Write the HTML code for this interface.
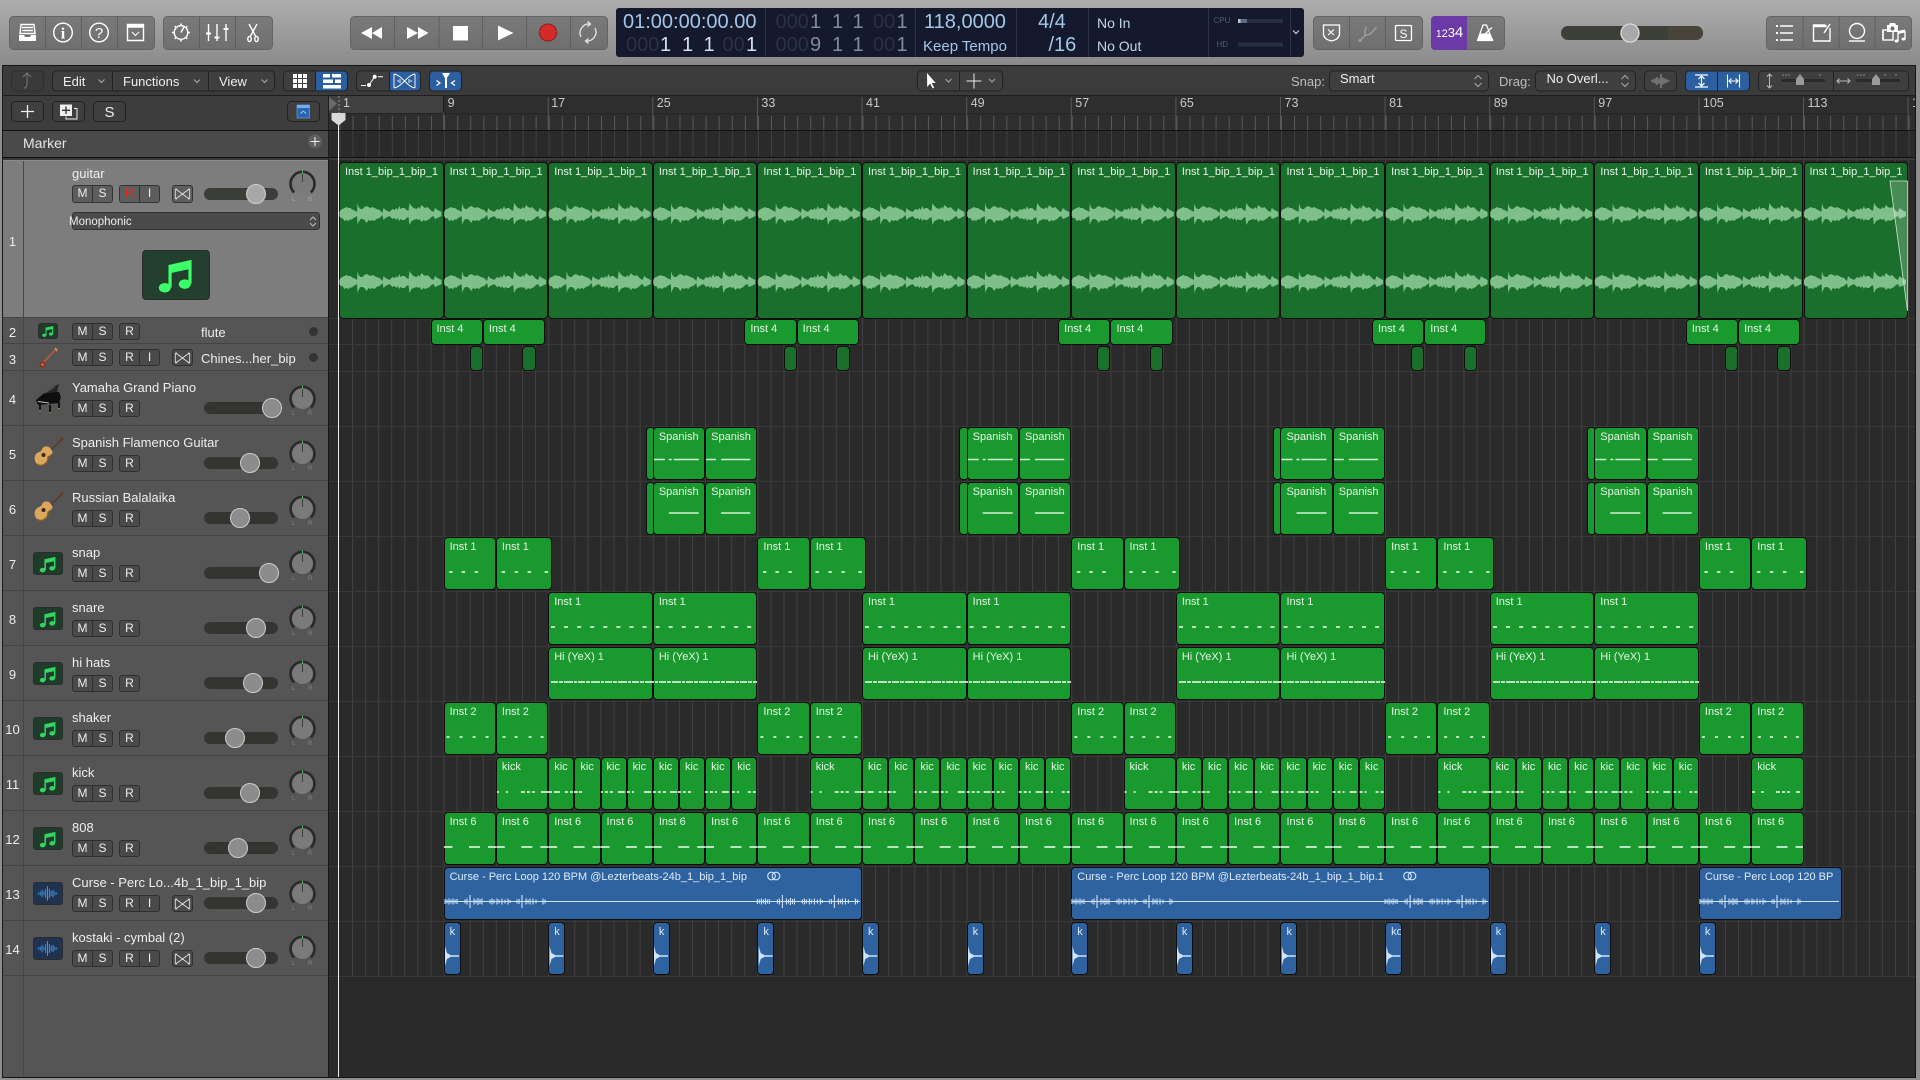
<!DOCTYPE html>
<html><head><meta charset="utf-8"><title>Logic Pro</title>
<style>
html,body{margin:0;padding:0;background:#8b8b8b}
#p{position:relative;width:1920px;height:1080px;overflow:hidden;background:#8b8b8b;font-family:"Liberation Sans",sans-serif}
svg{display:block}
.abs{position:absolute;left:0;top:0}
text{font-family:"Liberation Sans",sans-serif}
.tl{position:absolute;left:0;width:1916px;height:0}
.r{position:absolute;left:calc(339px + (var(--b) - 1)*13.076px);width:calc(var(--w)*13.076px);top:1px;height:var(--h,53px);box-sizing:border-box;background:#1a9a2e;border:1px solid #0e0e0e;border-radius:4px;font-size:11px;line-height:14px;color:#e6f4e6;padding:2px 0 0 5px;overflow:hidden;white-space:nowrap}
.d{background:#1b6f2c}
.u{background:#2f63a0;color:#dfeaf7}
.h{position:absolute;left:0;width:329px;background:#555;box-shadow:inset 0 -1px 0 #444}
.h:before{content:"";position:absolute;left:23px;top:0;bottom:0;width:1px;background:#474747}
.h>*{position:absolute}
.n{left:2px;width:21px;text-align:center;top:20px;font:normal 13px/18px "Liberation Sans",sans-serif;color:#eee}
.t{left:72px;top:9px;font-size:13px;line-height:16px;color:#eee;white-space:nowrap}
.bt{top:29px;height:17px;box-sizing:border-box;display:flex;border:1px solid #2f2f2f;background:#4a4a4a;border-radius:3px}
.bt i{flex:1;text-align:center;font:normal 12px/15px "Liberation Sans",sans-serif;color:#eee}
.bt i+i{border-left:1px solid #2f2f2f}
.m{left:72px;width:41px}
.r1{left:119px;width:21px}
.r2{left:119px;width:41px}
.f{left:172px;width:21px}
.f svg{margin:1px 0 0 1px}
.fd{left:204px;width:74px;top:31px;height:12px;background:#343531;border-radius:6px}
.fd u{position:absolute;top:-4px;width:20px;height:20px;box-sizing:border-box;margin-left:-10px;background:#8c8c8c;border:1.5px solid #cdcdcd;border-radius:50%}
.pk{left:289px;top:14px}
.lr{top:40px;font-size:6px;line-height:7px;color:#858585}
.ic{left:33px;top:16px;width:30px;height:23px;box-sizing:border-box;background:#1f3c2b;border:1px solid #2c2c2c;border-radius:3px;color:#35d465;display:flex;align-items:center;justify-content:center}
.au{background:#1f3350;color:#3f9cf0}
.dot{left:309px;width:9px;height:9px;border-radius:50%;background:#333}
.sel{background:#7d7d7d}
.sel .bt{background:#5d5d5d;border-color:#333}
.sel .bt i+i{border-left-color:#333}
.sel .fd{background:#3b3d38}
.sel .lr{color:#aaa}
</style></head><body><div id="p">

<svg width="0" height="0" style="position:absolute">
<defs>
<linearGradient id="bg" x1="0" y1="0" x2="0" y2="1"><stop offset="0" stop-color="#adadad"/><stop offset="1" stop-color="#8a8a8a"/></linearGradient>
<linearGradient id="bt" x1="0" y1="0" x2="0" y2="1"><stop offset="0" stop-color="#7a7a7a"/><stop offset="1" stop-color="#6f6f6f"/></linearGradient>
<symbol id="note" viewBox="0 0 24 24" fill="currentColor"><path d="M8.600 19.200V7L20 4.500v12.500" fill="none" stroke="currentColor" stroke-width="1.800"/><path d="M8.600 6.500L20 4v4.500L8.600 11z"/><ellipse cx="5.600" cy="19.300" rx="3.400" ry="2.700"/><ellipse cx="17" cy="17.200" rx="3.400" ry="2.700"/></symbol>
<symbol id="aud" viewBox="0 0 24 18"><path stroke="currentColor" stroke-width="1" fill="none" d="M1.500 8v2M3.500 7v4M5.500 5v8M7.500 7v4M9.500 4v10M11.500 1v16M13.500 4v10M15.500 6v6M17.500 5v8M19.500 7v4M21.500 8v2"/></symbol>
<symbol id="bow" viewBox="0 0 19 15"><path fill="none" stroke="#ddd" stroke-width="1" d="M1.500 2v11M17.500 2v11M1.500 2C7 5 12 10 17.500 13M1.500 13C7 10 12 5 17.500 2M1.500 2h2M1.500 13h2M17.500 2h-2M17.500 13h-2"/></symbol>
<symbol id="pan" viewBox="0 0 27 27"><circle cx="13.500" cy="13.500" r="10.500" fill="#7a7a7a"/><path d="M5.200 22.500A12 12 0 1 1 21.800 22.500" fill="none" stroke="#2a2a2a" stroke-width="2.600"/><path d="M13.500 0.500V12" stroke="#3c3c3c" stroke-width="1"/><path d="M13.500 0.500V4" stroke="#4fb56a" stroke-width="1"/></symbol>
<symbol id="gt" viewBox="0 0 30 32"><path d="M29 1L15 15" stroke="#5a3e28" stroke-width="1.800"/><path d="M27 0l3 1-2 3-2-1z" fill="#6b3a28"/><path d="M16 11c2 2 3 4 2 6-1 2-3 2-4 3 0 2 0 4-2 6-3 3-7 3-9 1-3-3-3-7-1-10 2-2 4-2 5-3 1-1 1-3 3-4 2-1 4-1 6 1z" fill="#dba65e"/><path d="M18 17c-1 2-3 2-4 3 0 2 0 4-2 6-3 3-7 3-9 1" fill="none" stroke="#8c5e24" stroke-width="1.300"/><circle cx="9.500" cy="18" r="2" fill="#3a2a18"/></symbol>
<symbol id="pia" viewBox="0 0 26 30"><path d="M1 17L8 11L14 8L24 9L26 14L24 20L3 22z" fill="#0e0e0e"/><path d="M8 11L20 3L24 1L22 9z" fill="#262626"/><path d="M10 10l10-6" stroke="#666" stroke-width=".6"/><path d="M3 18.500L14 20" stroke="#bbb" stroke-width="1"/><path d="M5 21v6M15 22v7M24 19v6" stroke="#111" stroke-width="2"/><path d="M5 27v1M15 29v1M24 25v1" stroke="#b98a3a" stroke-width="1.600"/></symbol>
<symbol id="bj" viewBox="0 0 20 22"><path d="M19 1L4 17" stroke="#b85c34" stroke-width="1.600"/><path d="M17 1l2 3" stroke="#dca070" stroke-width="1.200"/><ellipse cx="4.500" cy="17.500" rx="3.200" ry="3" fill="#8c3326"/><circle cx="4.500" cy="17.500" r="1" fill="#d8a070"/></symbol>
<path id="ws" fill="#7fbf8a" d="M0-2L1-4L3-5L5-6L7-7L9-6L11-6L12-5L14-4L16-3L17.500-2L18-11L19-7L21-5L23-5L25-7L27-8L29-7L31-6L33-7L35-6L37-5L40-4L42-2L43-1L44-6L46-4L48-3L50-2L51-3L53-5L55-4L57-6L58-4L60-8L61-5L63-6L65-6L67-4L69-3L70-11L72-8L74-6L77-5L79-7L80-5L82-9L84-7L86-6L88-7L90-5L92-3L94-2L95.500-6L98-4L100-3L102-2L102 2L100 3L98 4L95.500 5L94 2L92 3L90 5L88 6L86 7L84 6L82 8L80 5L79 6L77 5L74 6L72 7L70 11L69 3L67 4L65 6L63 6L61 5L60 7L58 4L57 6L55 4L53 5L51 3L50 2L48 3L46 4L44 6L43 1L42 2L40 4L37 5L35 7L33 6L31 7L29 6L27 9L25 6L23 5L21 5L19 8L18 11L17.500 2L16 3L14 4L12 6L11 5L9 7L7 6L5 7L3 4L1 4L0 2z"/>
<g id="w2"><use href="#ws" y="214"/><use href="#ws" y="282"/></g>
<g id="sn"><path d="M5.500 0h3.500M18 0h3.500M31 0h3.500M58 0h3.500M71 0h3.500M84 0h3.500M101 0h3.500"/></g>
<g id="sh"><path d="M3 0h3M16 0h3M29 0h3M42 0h3M59 0h3M71 0h3M85 0h3M97 0h3"/></g>
<g id="ki"><path d="M1 0h2M10 0h2M25 0h4M31 0h3M36 0h3M45 0h6M51 0h5M58 0h6M69 0h3M74 0h3M78 0h4M83 0h3M105 0h2M109 0h3M114 0h3M122 0h7M131 0h3M136 0h2M148 0h7M157 0h3M162 0h3M167 0h3M174 0h7M182 0h3M187 0h3M192 0h3M209 0h3M214 0h3M219 0h2M226 0h7M236 0h3M241 0h2M252 0h3M257 0h3"/></g>
<g id="s5"><path d="M1 0H12M16 0h3M21 0H46M53.300 0H63.300M68.300 0H97.500"/></g>
<g id="s6"><path d="M16 0H46M68.300 0H97.500"/></g>
<g id="cw"><path d="M0-2.500v5M2-2v4M4-3v6M6-2v4M8-3v6M10-2v4M12-2.500v5M20-2v4M22-3v6M25-6.500v13M29-3v6M31-2v4M33-3.500v7M35-2.500v5M37-3v6M45-2v4M47-3v6M49-2v4M52-3v6M54-2v4M57-3v6M60-2v4M63-3v6M65-1.500v3M72-2v4M74-2.500v5M77-6.500v13M81-3v6M83-2v4M85-3v6M88-3v6M91-2v4M98-3v6M100-2v4"/></g>
<path id="kw" d="M1-10L3-3L7-.7L15-.7L15 .7L7 .7L3 3L1 10z"/>
</defs>
</svg>

<!-- top chrome -->
<svg class="abs" width="1920" height="160" style="z-index:1">
<rect width="1920" height="66" fill="url(#bg)"/>
<g fill="url(#bt)" stroke="#646464">
<rect x="9.500" y="16.500" width="145" height="33" rx="4"/>
<rect x="163.500" y="16.500" width="109" height="33" rx="4"/>
<rect x="350.500" y="16.500" width="257" height="33" rx="4"/>
<rect x="1313.500" y="16.500" width="109" height="33" rx="4"/>
<rect x="1431.500" y="16.500" width="73" height="33" rx="4"/>
<rect x="1766.500" y="16.500" width="145" height="33" rx="4"/>
</g>
<path d="M1435 16h32v34h-32a4 4 0 0 1-4-4V20a4 4 0 0 1 4-4z" fill="#6b3aa6"/>
<path stroke="#5f5f5f" d="M45.500 17v32M81.500 17v32M117.500 17v32M199.500 17v32M235.500 17v32M394.500 17v32M439 17v32M482.500 17v32M526.500 17v32M570.500 17v32M1349.500 17v32M1385.500 17v32M1803 17v32M1839 17v32M1875 17v32" fill="none"/>
<g fill="none" stroke="#fff" stroke-width="1.400">
<path d="M21 24.500h13l1 9H20zM22 27.500h11M22 30.500h11" />
<circle cx="63" cy="32.500" r="9.300"/>
<circle cx="99" cy="32.500" r="9.300"/>
<path d="M127.500 24.500h16v16h-16z"/><path d="M127 26h17" stroke-width="3.500"/><path d="M132 32l3.500 3.500 3.500-3.500" stroke-width="1"/>
<circle cx="181" cy="32.500" r="6.800"/><path d="M181 32.500l3-5.500" />
<path d="M181 23.500v1.500M181 40v1.500M172 32.500h1.500M188.500 32.500h1.500M174.700 26.200l1 1M186.300 37.800l1 1M187.300 26.200l-1 1M175.700 37.800l-1 1" stroke-width="1.600"/>
<path d="M208.500 24v17M217 24v17M226 24v17"/><path d="M206 33.500h5M214.500 37.500h5M223.500 29h5" stroke-width="2"/>
<path d="M249 24l7 13M257 24l-7 13"/><ellipse cx="249.500" cy="39" rx="1.700" ry="2.600"/><ellipse cx="256.500" cy="39" rx="1.700" ry="2.600"/>
</g>
<path d="M19 35h5l1 2h5l1-2h5v6H19z" fill="#fff"/>
<text x="63" y="38.500" text-anchor="middle" font-size="16" font-weight="bold" fill="#fff" style="font-family:'Liberation Serif',serif">i</text>
<text x="99" y="38" text-anchor="middle" font-size="15" fill="#fff">?</text>
<g fill="#fff">
<path d="M372 27v12l-11-6zM382 27v12l-10-6z"/>
<path d="M407 27v12l11-6zM418 27v12l10.500-6z"/>
<rect x="453" y="26" width="15" height="14.500"/>
<path d="M498 25.500l15.500 7.500-15.500 7.500z"/>
</g>
<ellipse cx="548" cy="32.500" rx="8.700" ry="8.500" fill="#d42a2a" stroke="#8b2020"/>
<g fill="none" stroke="#e4e4e4" stroke-width="1.300"><path d="M581 37a9 9 0 0 1 9-13"/><path d="M595 28a9 9 0 0 1-9 13"/><path d="M587.500 21.500l3 2.500-3 2.500M588.500 38.500l-3 2.500 3 2.500"/></g>
<!-- LCD -->
<rect x="616" y="8" width="688" height="49" rx="3" fill="#141a2b"/>
<path stroke="#2b3449" d="M765.500 8v49M915.500 8v49M1016.500 8v49M1088.500 8v49M1208.500 8v49M1290.500 8v49"/>
<g font-size="20" fill="#a3c6ea">
<text x="623" y="28">01:00:00:00.00</text>
<text x="626" y="51" fill="#2a3142">000</text><text x="660" y="51" fill="#cfe2f6">1</text><text x="682" y="51" fill="#cfe2f6">1</text><text x="703.500" y="51" fill="#cfe2f6">1</text><text x="722.500" y="51" fill="#2a3142">00</text><text x="746" y="51" fill="#cfe2f6">1</text>
<text x="775.500" y="28" fill="#2a3142">000</text><text x="810" y="28" fill="#7d8ba3">1</text><text x="832" y="28" fill="#7d8ba3">1</text><text x="852.500" y="28" fill="#7d8ba3">1</text><text x="873" y="28" fill="#2a3142">00</text><text x="896.500" y="28" fill="#7d8ba3">1</text>
<text x="775.500" y="51" fill="#2a3142">000</text><text x="810" y="51" fill="#7d8ba3">9</text><text x="832" y="51" fill="#7d8ba3">1</text><text x="852.500" y="51" fill="#7d8ba3">1</text><text x="873" y="51" fill="#2a3142">00</text><text x="896.500" y="51" fill="#7d8ba3">1</text>
<text x="924" y="28">118,0000</text>
<text x="1038" y="28">4/4</text>
<text x="1048.500" y="51">/16</text>
</g>
<text x="923" y="51" font-size="15" fill="#a3c6ea">Keep Tempo</text>
<text x="1097" y="28" font-size="14" fill="#c2d6ea">No In</text>
<text x="1097" y="51" font-size="14" fill="#c2d6ea">No Out</text>
<text x="1213.500" y="23" font-size="8" fill="#4c5a70">CPU</text>
<text x="1216.500" y="47" font-size="8" fill="#4c5a70">HD</text>
<rect x="1238" y="19" width="45" height="4" fill="#252f40"/><rect x="1238" y="19" width="9" height="4" fill="#5d6c84"/><rect x="1238" y="19" width="2.500" height="4" fill="#b8c4d4"/>
<rect x="1238" y="42.500" width="45" height="4" fill="#252f40"/>
<path d="M1293 30.500l3 3 3-3" fill="none" stroke="#c2d6ea" stroke-width="1.200"/>
<!-- group 3 icons -->
<g fill="none" stroke="#fff" stroke-width="1.300">
<path d="M1323.500 25h16v10c-1.500 4-4 5-8 6-4-1-6.500-2-8-6z"/><path d="M1328 29.500l6 5.500M1334 29.500l-6 5.500" stroke-width="1.100"/>
<path d="M1360.500 40l5-5c-1-2-1-5 1-8M1365.500 35c2 1 6-1 11-8" stroke="#a2a2a2"/>
<rect x="1395.500" y="25.500" width="16" height="15" rx="1"/>
</g>
<circle cx="1360" cy="40.500" r="1.500" fill="#a2a2a2"/>
<text x="1403.500" y="38" text-anchor="middle" font-size="12" fill="#fff">S</text>
<text x="1436" y="37" fill="#fff"><tspan font-size="10">1</tspan><tspan font-size="11">2</tspan><tspan font-size="13">3</tspan><tspan font-size="15">4</tspan></text>
<path d="M1483 25h3.500l6 15.500h-15z" fill="none" stroke="#fff" stroke-width="1.200"/>
<path d="M1480.500 33.500h9.500l3.500 7h-15.500z" fill="#fff"/>
<path d="M1485 34l7-6.500" stroke="#fff" stroke-width="1.200"/>
<!-- master -->
<rect x="1561" y="26" width="142" height="14" rx="7" fill="#3d4039"/>
<path d="M1668 26h28a7 7 0 0 1 0 14h-28z" fill="#484439"/>
<circle cx="1630" cy="33" r="9" fill="#a9a9a9" stroke="#dcdcdc" stroke-width="1.300"/>
<!-- group 5 icons -->
<g fill="none" stroke="#fff" stroke-width="1.400">
<path d="M1780 26h13M1780 33h13M1780 40h13"/><path d="M1776 26h2M1776 33h2M1776 40h2" stroke-width="2"/>
<path d="M1825 25h-11.500v16h16.500v-13"/><path d="M1813.500 26h13" stroke-width="2.500"/><path d="M1824 33l6-9" />
<circle cx="1857" cy="31" r="7.500"/><path d="M1849 41h16"/>
<rect x="1883" y="30" width="10" height="10"/><path d="M1884 32h-2M1884 35h-2M1884 38h-2" />
<path d="M1898 32v9M1905 31v8"/>
</g>
<path d="M1887 25h2l1-2h5l1 2h2v7h-11z" fill="#fff"/><circle cx="1892.500" cy="28.500" r="2" fill="#6f6f6f"/>
<ellipse cx="1896.500" cy="41" rx="2" ry="1.500" fill="#fff"/><ellipse cx="1903.500" cy="39" rx="2" ry="1.500" fill="#fff"/><path d="M1898 31l7-1.500v3l-7 1.500z" fill="#fff"/>

<!-- window chrome rows -->
<rect x="2" y="65" width="1914" height="31" rx="3" fill="#3b3b3b"/>
<path d="M2 65.500h1914" stroke="#141414"/>
<rect x="2" y="95" width="327" height="35" fill="#3d3d3d"/>
<rect x="329" y="95" width="1587" height="35" fill="#2e2e2e"/>
<rect x="329" y="95" width="115" height="18" fill="#404040"/>
<path d="M2 95.500h1914" stroke="#1f1f1f"/>
<rect x="2" y="131" width="327" height="26" fill="#4a4a4a"/>
<rect x="329" y="131" width="1587" height="26" fill="#2a2a2a"/>
<rect x="2" y="157" width="1914" height="3" fill="#3a3a3a"/>
<g fill="#3f3f3f" stroke="#222">
<rect x="11.500" y="71" width="32" height="20" rx="4" fill="#3a3a3a" stroke="#2e2e2e"/>
<rect x="52.500" y="71" width="222" height="20" rx="4"/>
<rect x="283.500" y="71" width="64" height="20" rx="4"/>
<rect x="356.500" y="71" width="64" height="20" rx="4"/>
<rect x="917.500" y="71" width="85" height="20" rx="4"/>
<rect x="1329.500" y="71" width="159" height="20" rx="4"/>
<rect x="1535.500" y="71" width="100" height="20" rx="4"/>
<rect x="1644.500" y="71" width="32" height="20" rx="4"/>
<rect x="1758.500" y="71" width="150" height="20" rx="4"/>
<rect x="11.500" y="101.500" width="32" height="20" rx="4"/>
<rect x="52.500" y="101.500" width="32" height="20" rx="4"/>
<rect x="93.500" y="101.500" width="32" height="20" rx="4"/>
<rect x="287.500" y="101.500" width="32" height="20" rx="4"/>
</g>
<g fill="#2c5f9f" stroke="#222">
<path d="M315.500 71h28a4 4 0 0 1 4 4v12a4 4 0 0 1-4 4h-28z"/>
<path d="M389.500 71h27a4 4 0 0 1 4 4v12a4 4 0 0 1-4 4h-27z"/>
<rect x="429.500" y="71" width="32" height="20" rx="4"/>
<rect x="1685.500" y="71" width="64" height="20" rx="4"/>
</g>
<path stroke="#222" d="M112.500 71v20M208.500 71v20M959.500 71v20M1717.500 71v20M1833.500 71v20"/>
<g fill="#eee" font-size="13">
<text x="63" y="86">Edit</text><text x="123" y="86">Functions</text><text x="219" y="86">View</text>
<text x="1340" y="83">Smart</text><text x="1546.500" y="83">No Overl...</text>
</g>
<text x="1291" y="86" font-size="13" fill="#bdbdbd">Snap:</text>
<text x="1499" y="86" font-size="13" fill="#bdbdbd">Drag:</text>
<g fill="none" stroke="#aaa" stroke-width="1">
<path d="M98.500 79.500l3 3 3-3M194 79.500l3 3 3-3M261.500 79.500l3 3 3-3"/>
<path d="M945.500 79l3 3 3-3M989 79l3 3 3-3"/>
<path d="M1474.500 79l3.500-3.500 3.500 3.500M1474.500 83l3.500 3.500 3.500-3.500"/>
<path d="M1621.500 79l3.500-3.500 3.500 3.500M1621.500 83l3.500 3.500 3.500-3.500"/>
<path d="M24 88c4 0 3-5 3-15M23 77l4-4 4 4" stroke="#777"/>
</g>
<path d="M293 74h4v4h-4zM298 74h4v4h-4zM303 74h4v4h-4zM293 79h4v4h-4zM298 79h4v4h-4zM303 79h4v4h-4zM293 84h4v4h-4zM298 84h4v4h-4zM303 84h4v4h-4z" fill="#fff"/>
<path d="M323 74h7v3.500h-7zM332 74h9v3.500h-9zM323 79.500h10v3.500h-10zM335 79.500h6v3.500h-6zM323 85h18v3.500h-18z" fill="#fff"/>
<path d="M361 85.500h5M369 85l5.700-8.300M378 76.700h5" stroke="#fff" stroke-width="1" fill="none"/><circle cx="369" cy="85" r="2" fill="#fff"/><circle cx="374.700" cy="76.700" r="2" fill="#fff"/>
<path d="M394 74v14M415 74v14M394 74C402 75 407 87 415 88M394 88C402 87 407 75 415 74M398 80v2M400 79v4M409 79v4M411 80v2" fill="none" stroke="#fff" stroke-width=".9"/>
<path d="M436.500 80.500l3.500 2.500-3.500 2.500M455 80.500l-3.500 2.500 3.500 2.500" fill="none" stroke="#fff" stroke-width="1.200"/><path d="M442 73h8l-3 5v10h-2V78z" fill="#fff"/>
<path d="M933 73l.2 14 3-3.500 2.500 5 1.500-1-2.500-4.500h4z" fill="#fff" transform="translate(-6 0)"/>
<path d="M966.500 81h15M974 73.500v15" stroke="#eee" stroke-width="1" fill="none"/>
<path d="M1651 81h1M1653 79.500v3M1655 78.500v5M1657 77v8M1659 78.500v5M1661 74v14M1663 77.500v7M1665 78.500v5M1667 79.500v3M1669 80.500v1" stroke="#bbb" stroke-width=".8" fill="none"/>
<path d="M1695 75h13M1695 87h13M1701.500 76v10M1698.500 79l3-3 3 3M1698.500 83l3 3 3-3" stroke="#fff" fill="none" stroke-width="1.200"/>
<path d="M1727.500 74.500v13M1739.500 74.500v13M1729 81h9M1731.500 78.500l-2.500 2.500 2.500 2.500M1735.500 78.500l2.500 2.500-2.500 2.500" stroke="#fff" fill="none" stroke-width="1.100"/>
<path d="M1769.500 74v14M1767 76.500l2.500-2.500 2.500 2.500M1767 85.500l2.500 2.500 2.500-2.500" stroke="#bbb" fill="none"/>
<path d="M1837 81h13M1839.500 78.500l-2.500 2.500 2.500 2.500M1847.500 78.500l2.500 2.500-2.500 2.500" stroke="#bbb" fill="none"/>
<rect x="1781" y="79" width="44" height="3" rx="1.500" fill="#2a2a2a"/><rect x="1856" y="79" width="44" height="3" rx="1.500" fill="#2a2a2a"/>
<path d="M1800 74l4 5v6h-8v-6z" fill="#9a9a9a"/><path d="M1876 74l4 5v6h-8v-6z" fill="#9a9a9a"/>
<path d="M1783 74v2M1786 74v2M1789 74v2M1800 74v2M1820 74v2M1858 74v2M1861 74v2M1864 74v2M1885 74v2M1896 74v2" stroke="#888" fill="none"/>
<path d="M27.500 105v13M21 111.500h13" stroke="#eee" stroke-width="1.300" fill="none"/>
<path d="M60 104.500h12v11.500H60z" fill="#eee"/><path d="M66 106.500v7.500M62 110.300h8" stroke="#333" stroke-width="1.300"/><path d="M74 108.500h3v10.500H66v-2.500" fill="none" stroke="#eee"/>
<text x="109.500" y="117" text-anchor="middle" font-size="15" fill="#eee">S</text>
<rect x="297" y="105" width="12.500" height="13" fill="#2a66b0" stroke="#74aef0" stroke-width=".6"/><rect x="297" y="105" width="12.500" height="3" fill="#74aef0"/><path d="M300.500 113.500l2.800-2.500 2.800 2.500" fill="none" stroke="#9cc6f5"/>
<text x="23" y="148" font-size="14" fill="#e8e8e8">Marker</text>
<circle cx="315" cy="141.500" r="7" fill="#5f5f5f"/><path d="M315 137v9M310.500 141.500h9" stroke="#eee" stroke-width="1.100"/>
<!-- ruler -->
<path d="M329 113.500h1587" stroke="#242424"/>
<line x1="339.500" x2="1916" y1="123" y2="123" stroke="#5a5a5a" stroke-width="14" stroke-dasharray="1 12.076"/>
<line x1="339.500" x2="1916" y1="144" y2="144" stroke="#404040" stroke-width="26" stroke-dasharray="1 12.076"/>
<path d="M548.200 97v33M652.800 97v33M757.400 97v33M862 97v33M966.700 97v33M1071.300 97v33M1175.900 97v33M1280.500 97v33M1385.100 97v33M1489.700 97v33M1594.300 97v33M1698.900 97v33M1803.500 97v33M1908.100 97v33" stroke="#585858"/>
<path d="M443.600 95v18" stroke="#1a1a1a"/><path d="M443.600 113v17" stroke="#585858"/>
<g font-size="12.500" fill="#c8c8c8">
<text x="343" y="107">1</text><text x="447.600" y="107">9</text><text x="551.200" y="107">17</text><text x="656.800" y="107">25</text><text x="761.400" y="107">33</text><text x="866" y="107">41</text><text x="970.700" y="107">49</text><text x="1075.300" y="107">57</text><text x="1179.900" y="107">65</text><text x="1284.500" y="107">73</text><text x="1389.100" y="107">81</text><text x="1493.700" y="107">89</text><text x="1598.300" y="107">97</text><text x="1702.900" y="107">105</text><text x="1807.500" y="107">113</text><text x="1912" y="107">121</text>
</g>
<path d="M329 97l8 6.500-8 7.500z" fill="#6a6a6a"/>
<path d="M339 96v17" stroke="#999" stroke-dasharray="2 2"/>
<path d="M2 130.500h1914" stroke="#111"/>
<path d="M2 157.500h1914M2 160.500h1914" stroke="#111"/>
<path d="M328.500 95v65" stroke="#1c1c1c"/>
</svg>

<!-- timeline background -->
<svg class="abs" width="1920" height="1080" style="z-index:0">
<rect x="329" y="160" width="1587" height="917" fill="#2a2a2a"/>
<line x1="352" x2="1916" y1="568" y2="568" stroke="#414141" stroke-width="816" stroke-dasharray="1 12.076"/>
<path d="M329 318.500h1587M329 344.500h1587M329 371.500h1587M329 426.500h1587M329 481.500h1587M329 536.500h1587M329 591.500h1587M329 646.500h1587M329 701.500h1587M329 756.500h1587M329 811.500h1587M329 866.500h1587M329 921.500h1587M329 976.500h1587" stroke="#383838"/>
</svg>

<!-- regions -->
<div style="position:absolute;left:0;top:0;z-index:2">
<div class="tl" style="top:161px;--h:157px">
<div class="r d" style="--b:1;--w:8">Inst 1_bip_1_bip_1</div><div class="r d" style="--b:9;--w:8">Inst 1_bip_1_bip_1</div><div class="r d" style="--b:17;--w:8">Inst 1_bip_1_bip_1</div><div class="r d" style="--b:25;--w:8">Inst 1_bip_1_bip_1</div><div class="r d" style="--b:33;--w:8">Inst 1_bip_1_bip_1</div><div class="r d" style="--b:41;--w:8">Inst 1_bip_1_bip_1</div><div class="r d" style="--b:49;--w:8">Inst 1_bip_1_bip_1</div><div class="r d" style="--b:57;--w:8">Inst 1_bip_1_bip_1</div><div class="r d" style="--b:65;--w:8">Inst 1_bip_1_bip_1</div><div class="r d" style="--b:73;--w:8">Inst 1_bip_1_bip_1</div><div class="r d" style="--b:81;--w:8">Inst 1_bip_1_bip_1</div><div class="r d" style="--b:89;--w:8">Inst 1_bip_1_bip_1</div><div class="r d" style="--b:97;--w:8">Inst 1_bip_1_bip_1</div><div class="r d" style="--b:105;--w:8">Inst 1_bip_1_bip_1</div><div class="r d" style="--b:113;--w:8">Inst 1_bip_1_bip_1</div>
</div>
<div class="tl" style="top:318px;--h:26px">
<div class="r" style="--b:8;--w:4">Inst 4</div><div class="r" style="--b:12;--w:4.75">Inst 4</div><div class="r" style="--b:32;--w:4">Inst 4</div><div class="r" style="--b:36;--w:4.75">Inst 4</div><div class="r" style="--b:56;--w:4">Inst 4</div><div class="r" style="--b:60;--w:4.75">Inst 4</div><div class="r" style="--b:80;--w:4">Inst 4</div><div class="r" style="--b:84;--w:4.75">Inst 4</div><div class="r" style="--b:104;--w:4">Inst 4</div><div class="r" style="--b:108;--w:4.75">Inst 4</div>
</div>
<div class="tl" style="top:345px;--h:25px">
<div class="r d" style="--b:11;--w:1"></div><div class="r d" style="--b:15;--w:1.05"></div><div class="r d" style="--b:35;--w:1"></div><div class="r d" style="--b:39;--w:1.05"></div><div class="r d" style="--b:59;--w:1"></div><div class="r d" style="--b:63;--w:1.05"></div><div class="r d" style="--b:83;--w:1"></div><div class="r d" style="--b:87;--w:1.05"></div><div class="r d" style="--b:107;--w:1"></div><div class="r d" style="--b:111;--w:1.05"></div>
</div>
<div class="tl" style="top:426px">
<div class="r" style="--b:24.45;--w:.7"></div><div class="r" style="--b:25;--w:4">Spanish</div><div class="r" style="--b:29;--w:4">Spanish</div>
<div class="r" style="--b:48.45;--w:.7"></div><div class="r" style="--b:49;--w:4">Spanish</div><div class="r" style="--b:53;--w:4">Spanish</div>
<div class="r" style="--b:72.45;--w:.7"></div><div class="r" style="--b:73;--w:4">Spanish</div><div class="r" style="--b:77;--w:4">Spanish</div>
<div class="r" style="--b:96.45;--w:.7"></div><div class="r" style="--b:97;--w:4">Spanish</div><div class="r" style="--b:101;--w:4">Spanish</div>
</div>
<div class="tl" style="top:481px">
<div class="r" style="--b:24.45;--w:.7"></div><div class="r" style="--b:25;--w:4">Spanish</div><div class="r" style="--b:29;--w:4">Spanish</div>
<div class="r" style="--b:48.45;--w:.7"></div><div class="r" style="--b:49;--w:4">Spanish</div><div class="r" style="--b:53;--w:4">Spanish</div>
<div class="r" style="--b:72.45;--w:.7"></div><div class="r" style="--b:73;--w:4">Spanish</div><div class="r" style="--b:77;--w:4">Spanish</div>
<div class="r" style="--b:96.45;--w:.7"></div><div class="r" style="--b:97;--w:4">Spanish</div><div class="r" style="--b:101;--w:4">Spanish</div>
</div>
<div class="tl" style="top:536px">
<div class="r" style="--b:9;--w:4">Inst 1</div><div class="r" style="--b:13;--w:4.3">Inst 1</div><div class="r" style="--b:33;--w:4">Inst 1</div><div class="r" style="--b:37;--w:4.3">Inst 1</div><div class="r" style="--b:57;--w:4">Inst 1</div><div class="r" style="--b:61;--w:4.3">Inst 1</div><div class="r" style="--b:81;--w:4">Inst 1</div><div class="r" style="--b:85;--w:4.3">Inst 1</div><div class="r" style="--b:105;--w:4">Inst 1</div><div class="r" style="--b:109;--w:4.3">Inst 1</div>
</div>
<div class="tl" style="top:591px">
<div class="r" style="--b:17;--w:8">Inst 1</div><div class="r" style="--b:25;--w:8">Inst 1</div><div class="r" style="--b:41;--w:8">Inst 1</div><div class="r" style="--b:49;--w:8">Inst 1</div><div class="r" style="--b:65;--w:8">Inst 1</div><div class="r" style="--b:73;--w:8">Inst 1</div><div class="r" style="--b:89;--w:8">Inst 1</div><div class="r" style="--b:97;--w:8">Inst 1</div>
</div>
<div class="tl" style="top:646px">
<div class="r" style="--b:17;--w:8">Hi (YeX) 1</div><div class="r" style="--b:25;--w:8">Hi (YeX) 1</div><div class="r" style="--b:41;--w:8">Hi (YeX) 1</div><div class="r" style="--b:49;--w:8">Hi (YeX) 1</div><div class="r" style="--b:65;--w:8">Hi (YeX) 1</div><div class="r" style="--b:73;--w:8">Hi (YeX) 1</div><div class="r" style="--b:89;--w:8">Hi (YeX) 1</div><div class="r" style="--b:97;--w:8">Hi (YeX) 1</div>
</div>
<div class="tl" style="top:701px">
<div class="r" style="--b:9;--w:4">Inst 2</div><div class="r" style="--b:13;--w:4">Inst 2</div><div class="r" style="--b:33;--w:4">Inst 2</div><div class="r" style="--b:37;--w:4">Inst 2</div><div class="r" style="--b:57;--w:4">Inst 2</div><div class="r" style="--b:61;--w:4">Inst 2</div><div class="r" style="--b:81;--w:4">Inst 2</div><div class="r" style="--b:85;--w:4">Inst 2</div><div class="r" style="--b:105;--w:4">Inst 2</div><div class="r" style="--b:109;--w:4">Inst 2</div>
</div>
<div class="tl" style="top:756px">
<div class="r" style="--b:13;--w:4">kick</div><div class="r" style="--b:17;--w:2">kic</div><div class="r" style="--b:19;--w:2">kic</div><div class="r" style="--b:21;--w:2">kic</div><div class="r" style="--b:23;--w:2">kic</div><div class="r" style="--b:25;--w:2">kic</div><div class="r" style="--b:27;--w:2">kic</div><div class="r" style="--b:29;--w:2">kic</div><div class="r" style="--b:31;--w:2">kic</div>
<div class="r" style="--b:37;--w:4">kick</div><div class="r" style="--b:41;--w:2">kic</div><div class="r" style="--b:43;--w:2">kic</div><div class="r" style="--b:45;--w:2">kic</div><div class="r" style="--b:47;--w:2">kic</div><div class="r" style="--b:49;--w:2">kic</div><div class="r" style="--b:51;--w:2">kic</div><div class="r" style="--b:53;--w:2">kic</div><div class="r" style="--b:55;--w:2">kic</div>
<div class="r" style="--b:61;--w:4">kick</div><div class="r" style="--b:65;--w:2">kic</div><div class="r" style="--b:67;--w:2">kic</div><div class="r" style="--b:69;--w:2">kic</div><div class="r" style="--b:71;--w:2">kic</div><div class="r" style="--b:73;--w:2">kic</div><div class="r" style="--b:75;--w:2">kic</div><div class="r" style="--b:77;--w:2">kic</div><div class="r" style="--b:79;--w:2">kic</div>
<div class="r" style="--b:85;--w:4">kick</div><div class="r" style="--b:89;--w:2">kic</div><div class="r" style="--b:91;--w:2">kic</div><div class="r" style="--b:93;--w:2">kic</div><div class="r" style="--b:95;--w:2">kic</div><div class="r" style="--b:97;--w:2">kic</div><div class="r" style="--b:99;--w:2">kic</div><div class="r" style="--b:101;--w:2">kic</div><div class="r" style="--b:103;--w:2">kic</div>
<div class="r" style="--b:109;--w:4">kick</div>
</div>
<div class="tl" style="top:811px">
<div class="r" style="--b:9;--w:4">Inst 6</div><div class="r" style="--b:13;--w:4">Inst 6</div><div class="r" style="--b:17;--w:4">Inst 6</div><div class="r" style="--b:21;--w:4">Inst 6</div><div class="r" style="--b:25;--w:4">Inst 6</div><div class="r" style="--b:29;--w:4">Inst 6</div><div class="r" style="--b:33;--w:4">Inst 6</div><div class="r" style="--b:37;--w:4">Inst 6</div><div class="r" style="--b:41;--w:4">Inst 6</div><div class="r" style="--b:45;--w:4">Inst 6</div><div class="r" style="--b:49;--w:4">Inst 6</div><div class="r" style="--b:53;--w:4">Inst 6</div><div class="r" style="--b:57;--w:4">Inst 6</div><div class="r" style="--b:61;--w:4">Inst 6</div><div class="r" style="--b:65;--w:4">Inst 6</div><div class="r" style="--b:69;--w:4">Inst 6</div><div class="r" style="--b:73;--w:4">Inst 6</div><div class="r" style="--b:77;--w:4">Inst 6</div><div class="r" style="--b:81;--w:4">Inst 6</div><div class="r" style="--b:85;--w:4">Inst 6</div><div class="r" style="--b:89;--w:4">Inst 6</div><div class="r" style="--b:93;--w:4">Inst 6</div><div class="r" style="--b:97;--w:4">Inst 6</div><div class="r" style="--b:101;--w:4">Inst 6</div><div class="r" style="--b:105;--w:4">Inst 6</div><div class="r" style="--b:109;--w:4">Inst 6</div>
</div>
<div class="tl" style="top:866px">
<div class="r u" style="--b:9;--w:32">Curse - Perc Loop 120 BPM @Lezterbeats-24b_1_bip_1_bip</div><div class="r u" style="--b:57;--w:32">Curse - Perc Loop 120 BPM @Lezterbeats-24b_1_bip_1_bip.1</div><div class="r u" style="--b:105;--w:10.95">Curse - Perc Loop 120 BP</div>
</div>
<div class="tl" style="top:921px">
<div class="r u" style="--b:9;--w:1.3">k</div><div class="r u" style="--b:17;--w:1.3">k</div><div class="r u" style="--b:25;--w:1.3">k</div><div class="r u" style="--b:33;--w:1.3">k</div><div class="r u" style="--b:41;--w:1.3">k</div><div class="r u" style="--b:49;--w:1.3">k</div><div class="r u" style="--b:57;--w:1.3">k</div><div class="r u" style="--b:65;--w:1.3">k</div><div class="r u" style="--b:73;--w:1.3">k</div><div class="r u" style="--b:81;--w:1.3">ko</div><div class="r u" style="--b:89;--w:1.3">k</div><div class="r u" style="--b:97;--w:1.3">k</div><div class="r u" style="--b:105;--w:1.3">k</div>
</div>
</div>

<!-- region contents -->
<svg class="abs" width="1920" height="1080" style="z-index:3">
<use href="#w2" x="339.500"/><use href="#w2" x="444.100"/><use href="#w2" x="548.700"/><use href="#w2" x="653.300"/><use href="#w2" x="757.900"/><use href="#w2" x="862.500"/><use href="#w2" x="967.200"/><use href="#w2" x="1071.800"/><use href="#w2" x="1176.400"/><use href="#w2" x="1281"/><use href="#w2" x="1385.600"/><use href="#w2" x="1490.200"/><use href="#w2" x="1594.800"/><use href="#w2" x="1699.400"/><use href="#w2" x="1804"/>
<path d="M1890 181h17.500v130z" fill="#fff" fill-opacity=".2" stroke="#cfe6d2" stroke-width=".8"/>
<g fill="none" stroke="#d2f0d4" stroke-width="1.800">
<g stroke-width="1.500"><use href="#s5" x="652.800" y="459.500"/><use href="#s5" x="966.700" y="459.500"/><use href="#s5" x="1280.500" y="459.500"/><use href="#s5" x="1594.300" y="459.500"/>
<use href="#s6" x="652.800" y="513"/><use href="#s6" x="966.700" y="513"/><use href="#s6" x="1280.500" y="513"/><use href="#s6" x="1594.300" y="513"/></g>
<use href="#sn" x="443.600" y="572"/><use href="#sn" x="757.400" y="572"/><use href="#sn" x="1071.300" y="572"/><use href="#sn" x="1385.100" y="572"/><use href="#sn" x="1698.900" y="572"/>
<line x1="551" x2="757" y1="627" y2="627" stroke-dasharray="4 9.076"/><line x1="865" x2="1071" y1="627" y2="627" stroke-dasharray="4 9.076"/><line x1="1179" x2="1385" y1="627" y2="627" stroke-dasharray="4 9.076"/><line x1="1493" x2="1699" y1="627" y2="627" stroke-dasharray="4 9.076"/>
<line x1="551" x2="757" y1="682" y2="682" stroke-dasharray="7 1 4 1 9 1 3 1"/><line x1="865" x2="1071" y1="682" y2="682" stroke-dasharray="7 1 4 1 9 1 3 1"/><line x1="1179" x2="1385" y1="682" y2="682" stroke-dasharray="7 1 4 1 9 1 3 1"/><line x1="1493" x2="1699" y1="682" y2="682" stroke-dasharray="7 1 4 1 9 1 3 1"/>
<use href="#sh" x="443.600" y="737"/><use href="#sh" x="757.400" y="737"/><use href="#sh" x="1071.300" y="737"/><use href="#sh" x="1385.100" y="737"/><use href="#sh" x="1698.900" y="737"/>
<use href="#ki" x="495.900" y="792"/><use href="#ki" x="809.700" y="792"/><use href="#ki" x="1123.600" y="792"/><use href="#ki" x="1437.400" y="792"/>
<path d="M1752 792h3M1761 792h3M1776 792h4M1782 792h3M1787 792h3M1796 792h4"/>
<line x1="444" x2="1803" y1="847" y2="847" stroke-dasharray="8.500 16.500 11 8 8 .3"/>
</g>
<g fill="none" stroke="#cfe3fb" stroke-width="1.100">
<path d="M445 901.500H860M1072 901.500H1488M1700 901.500H1839"/>
<use href="#cw" x="445" y="901.500"/><use href="#cw" x="757.400" y="901.500"/><use href="#cw" x="1072" y="901.500"/><use href="#cw" x="1385.100" y="901.500"/><use href="#cw" x="1700" y="901.500"/>
<circle cx="771.500" cy="876" r="3.800"/><circle cx="776" cy="876" r="3.800"/>
<circle cx="1407.500" cy="876" r="3.800"/><circle cx="1412" cy="876" r="3.800"/>
</g>
<g fill="#cfe3fb">
<use href="#kw" x="444" y="956"/><use href="#kw" x="548.500" y="956"/><use href="#kw" x="653" y="956"/><use href="#kw" x="757.700" y="956"/><use href="#kw" x="862.300" y="956"/><use href="#kw" x="967" y="956"/><use href="#kw" x="1071.500" y="956"/><use href="#kw" x="1176" y="956"/><use href="#kw" x="1280.800" y="956"/><use href="#kw" x="1385.300" y="956"/><use href="#kw" x="1490" y="956"/><use href="#kw" x="1594.500" y="956"/><use href="#kw" x="1699" y="956"/>
</g>
</svg>

<!-- track headers -->
<div style="position:absolute;left:0;top:0;z-index:4">
<div class="h" style="top:976px;height:101px;box-shadow:none"></div>

<div class="h sel" style="top:161px;height:157px">
<b class="n" style="top:72px">1</b><span class="t" style="top:5px">guitar</span>
<div class="bt m" style="top:24px;height:18px"><i>M</i><i>S</i></div>
<div class="bt r2" style="top:24px;height:18px"><i style="color:#f0281e">R</i><i>I</i></div>
<div class="bt f" style="top:24px;height:18px"><svg width="17" height="14"><use href="#bow"/></svg></div>
<div class="fd" style="top:27px"><u style="left:52px;background:#a8a8a8"></u></div>
<svg class="pk" style="top:9px" width="27" height="27"><use href="#pan"/></svg>
<span class="lr" style="left:292px;top:36px">L</span><span class="lr" style="left:308px;top:36px">R</span>
<div style="left:72px;top:51px;width:248px;height:18px;box-sizing:border-box;background:#4b4b4b;border:1px solid #333;border-radius:3px"></div>
<span style="left:69px;top:54px;font-size:11.500px;line-height:14px;color:#eee">Monophonic</span>
<svg style="left:309px;top:54px" width="8" height="13"><path d="M1 5l3-3 3 3M1 8l3 3 3-3" fill="none" stroke="#bbb"/></svg>
<div class="ic" style="left:142px;top:89px;width:68px;height:50px;color:#3dff6a;background:#23402f;border-radius:4px"><svg width="42" height="42"><use href="#note"/></svg></div>
</div>

<div class="h" style="top:318px;height:26px">
<b class="n" style="top:6px">2</b>
<div class="ic" style="left:38px;top:5px;width:20px;height:16px"><svg width="14" height="14"><use href="#note"/></svg></div>
<div class="bt m" style="top:5px"><i>M</i><i>S</i></div><div class="bt r1" style="top:5px"><i>R</i></div>
<span class="t" style="left:201px;top:7px">flute</span><div class="dot" style="top:9px"></div>
</div>

<div class="h" style="top:344px;height:27px">
<b class="n" style="top:7px">3</b>
<svg style="left:38px;top:3px" width="20" height="22"><use href="#bj"/></svg>
<div class="bt m" style="top:5px"><i>M</i><i>S</i></div><div class="bt r2" style="top:5px"><i>R</i><i>I</i></div>
<div class="bt f" style="top:5px"><svg width="17" height="14"><use href="#bow"/></svg></div>
<span class="t" style="left:201px;top:7px">Chines...her_bip</span><div class="dot" style="top:9px"></div>
</div>

<div class="h" style="top:371px;height:55px"><b class="n">4</b><svg style="left:35px;top:12px" width="26" height="30"><use href="#pia"/></svg><span class="t">Yamaha Grand Piano</span><div class="bt m"><i>M</i><i>S</i></div><div class="bt r1"><i>R</i></div><div class="fd"><u style="left:68px"></u></div><svg class="pk" width="27" height="27"><use href="#pan"/></svg><span class="lr" style="left:292px">L</span><span class="lr" style="left:308px">R</span></div>

<div class="h" style="top:426px;height:55px"><b class="n">5</b><svg style="left:34px;top:11px" width="30" height="32"><use href="#gt"/></svg><span class="t">Spanish Flamenco Guitar</span><div class="bt m"><i>M</i><i>S</i></div><div class="bt r1"><i>R</i></div><div class="fd"><u style="left:46px"></u></div><svg class="pk" width="27" height="27"><use href="#pan"/></svg><span class="lr" style="left:292px">L</span><span class="lr" style="left:308px">R</span></div>

<div class="h" style="top:481px;height:55px"><b class="n">6</b><svg style="left:34px;top:11px" width="30" height="32"><use href="#gt"/></svg><span class="t">Russian Balalaika</span><div class="bt m"><i>M</i><i>S</i></div><div class="bt r1"><i>R</i></div><div class="fd"><u style="left:36px"></u></div><svg class="pk" width="27" height="27"><use href="#pan"/></svg><span class="lr" style="left:292px">L</span><span class="lr" style="left:308px">R</span></div>

<div class="h" style="top:536px;height:55px"><b class="n">7</b><div class="ic"><svg width="20" height="20"><use href="#note"/></svg></div><span class="t">snap</span><div class="bt m"><i>M</i><i>S</i></div><div class="bt r1"><i>R</i></div><div class="fd"><u style="left:65px"></u></div><svg class="pk" width="27" height="27"><use href="#pan"/></svg><span class="lr" style="left:292px">L</span><span class="lr" style="left:308px">R</span></div>

<div class="h" style="top:591px;height:55px"><b class="n">8</b><div class="ic"><svg width="20" height="20"><use href="#note"/></svg></div><span class="t">snare</span><div class="bt m"><i>M</i><i>S</i></div><div class="bt r1"><i>R</i></div><div class="fd"><u style="left:52px"></u></div><svg class="pk" width="27" height="27"><use href="#pan"/></svg><span class="lr" style="left:292px">L</span><span class="lr" style="left:308px">R</span></div>

<div class="h" style="top:646px;height:55px"><b class="n">9</b><div class="ic"><svg width="20" height="20"><use href="#note"/></svg></div><span class="t">hi hats</span><div class="bt m"><i>M</i><i>S</i></div><div class="bt r1"><i>R</i></div><div class="fd"><u style="left:49px"></u></div><svg class="pk" width="27" height="27"><use href="#pan"/></svg><span class="lr" style="left:292px">L</span><span class="lr" style="left:308px">R</span></div>

<div class="h" style="top:701px;height:55px"><b class="n">10</b><div class="ic"><svg width="20" height="20"><use href="#note"/></svg></div><span class="t">shaker</span><div class="bt m"><i>M</i><i>S</i></div><div class="bt r1"><i>R</i></div><div class="fd"><u style="left:31px"></u></div><svg class="pk" width="27" height="27"><use href="#pan"/></svg><span class="lr" style="left:292px">L</span><span class="lr" style="left:308px">R</span></div>

<div class="h" style="top:756px;height:55px"><b class="n">11</b><div class="ic"><svg width="20" height="20"><use href="#note"/></svg></div><span class="t">kick</span><div class="bt m"><i>M</i><i>S</i></div><div class="bt r1"><i>R</i></div><div class="fd"><u style="left:46px"></u></div><svg class="pk" width="27" height="27"><use href="#pan"/></svg><span class="lr" style="left:292px">L</span><span class="lr" style="left:308px">R</span></div>

<div class="h" style="top:811px;height:55px"><b class="n">12</b><div class="ic"><svg width="20" height="20"><use href="#note"/></svg></div><span class="t">808</span><div class="bt m"><i>M</i><i>S</i></div><div class="bt r1"><i>R</i></div><div class="fd"><u style="left:34px"></u></div><svg class="pk" width="27" height="27"><use href="#pan"/></svg><span class="lr" style="left:292px">L</span><span class="lr" style="left:308px">R</span></div>

<div class="h" style="top:866px;height:55px"><b class="n">13</b><div class="ic au"><svg width="22" height="17"><use href="#aud"/></svg></div><span class="t">Curse - Perc Lo...4b_1_bip_1_bip</span><div class="bt m"><i>M</i><i>S</i></div><div class="bt r2"><i>R</i><i>I</i></div><div class="bt f"><svg width="17" height="14"><use href="#bow"/></svg></div><div class="fd"><u style="left:52px"></u></div><svg class="pk" width="27" height="27"><use href="#pan"/></svg><span class="lr" style="left:292px">L</span><span class="lr" style="left:308px">R</span></div>

<div class="h" style="top:921px;height:55px"><b class="n">14</b><div class="ic au"><svg width="22" height="17"><use href="#aud"/></svg></div><span class="t">kostaki - cymbal (2)</span><div class="bt m"><i>M</i><i>S</i></div><div class="bt r2"><i>R</i><i>I</i></div><div class="bt f"><svg width="17" height="14"><use href="#bow"/></svg></div><div class="fd"><u style="left:52px"></u></div><svg class="pk" width="27" height="27"><use href="#pan"/></svg><span class="lr" style="left:292px">L</span><span class="lr" style="left:308px">R</span></div>
</div>

<!-- playhead and window edges -->
<svg class="abs" width="1920" height="1080" style="z-index:5;pointer-events:none">
<path d="M328.500 160V1077" stroke="#161616"/>
<path d="M338.500 120V1077" stroke="#eeeeee"/>
<path d="M331.500 113h14v7l-7 5.500-7-5.500z" fill="#d8d8d8"/>
<rect x="0" y="65" width="2" height="1015" fill="#8f8f8f"/><rect x="2" y="65" width="1" height="1013" fill="#1a1a1a"/>
<rect x="1916" y="65" width="4" height="1015" fill="#8f8f8f"/><rect x="1915" y="65" width="1" height="1013" fill="#141414"/>
<rect x="0" y="1078" width="1920" height="2" fill="#8f8f8f"/><rect x="2" y="1077" width="1914" height="1" fill="#141414"/>
</svg>

</div></body></html>
